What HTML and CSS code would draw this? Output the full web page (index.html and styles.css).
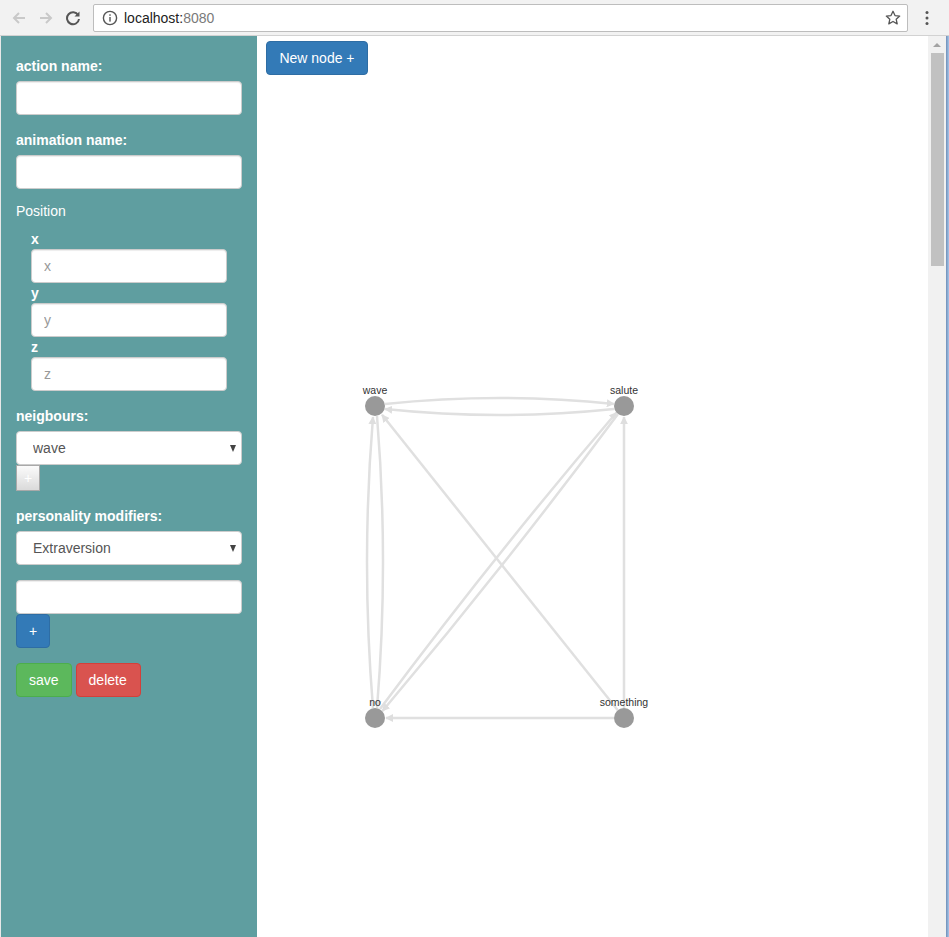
FILE: index.html
```html
<!DOCTYPE html>
<html lang="en">
<head>
<meta charset="utf-8">
<title>localhost:8080</title>
<link rel="stylesheet" href="styles.css">
</head>
<body>
<div class="chrome">
  <span class="navbtn">
    <svg width="16" height="16" viewBox="0 0 16 16"><path d="M14 8H3M8 3L3 8l5 5" fill="none" stroke="#c9c9c9" stroke-width="2"/></svg>
  </span>
  <span class="navbtn">
    <svg width="16" height="16" viewBox="0 0 16 16"><path d="M2 8h11M8 3l5 5-5 5" fill="none" stroke="#c9c9c9" stroke-width="2"/></svg>
  </span>
  <span class="navbtn">
    <svg width="16" height="16" viewBox="0 0 16 16"><path d="M13.2 5.2A6 6 0 1 0 14 9" fill="none" stroke="#555" stroke-width="2"/><path d="M14.5 1.5v5h-5z" fill="#555"/></svg>
  </span>
  <div class="omnibox">
    <svg class="info" width="16" height="16" viewBox="0 0 16 16"><circle cx="8" cy="8" r="6.6" fill="none" stroke="#555" stroke-width="1.4"/><rect x="7.3" y="7" width="1.4" height="4.6" fill="#555"/><rect x="7.3" y="4.3" width="1.4" height="1.5" fill="#555"/></svg>
    <span class="url"><span class="host">localhost:</span><span class="port">8080</span></span>
    <svg class="star" width="16" height="16" viewBox="0 0 16 16"><path d="M8 1.3l2 4.3 4.7.5-3.5 3.2 1 4.6L8 11.5l-4.2 2.4 1-4.6L1.3 6.1 6 5.6z" fill="none" stroke="#555" stroke-width="1.3" stroke-linejoin="round"/></svg>
  </div>
  <span class="menu">
    <svg width="16" height="16" viewBox="0 0 16 16"><circle cx="8" cy="2.5" r="1.5" fill="#555"/><circle cx="8" cy="8" r="1.5" fill="#555"/><circle cx="8" cy="13.5" r="1.5" fill="#555"/></svg>
  </span>
</div>

<div class="window">
  <aside class="sidebar">
    <div class="group">
      <label class="field-label">action name:</label>
      <input class="text-input" type="text">
    </div>
    <div class="group">
      <label class="field-label">animation name:</label>
      <input class="text-input" type="text">
    </div>
    <p class="position-title">Position</p>
    <div class="coords">
      <label class="coord-label">x</label>
      <input class="text-input coord-input" type="text" placeholder="x">
      <label class="coord-label">y</label>
      <input class="text-input coord-input" type="text" placeholder="y">
      <label class="coord-label">z</label>
      <input class="text-input coord-input" type="text" placeholder="z">
    </div>
    <div class="group-top">
      <label class="field-label">neigbours:</label>
      <div class="select-wrap">
        <select class="select"><option>wave</option></select>
      </div>
      <button class="btn-tiny">+</button>
    </div>
    <div class="group-top">
      <label class="field-label">personality modifiers:</label>
      <div class="select-wrap">
        <select class="select"><option>Extraversion</option></select>
      </div>
    </div>
    <div class="group-top">
      <input class="text-input" type="text">
      <button class="btn btn-primary">+</button>
    </div>
    <div class="actions">
      <button class="btn btn-success">save</button>
      <button class="btn btn-danger">delete</button>
    </div>
  </aside>

  <main class="main">
    <button class="btn btn-primary">New node +</button>
    <svg class="graph" width="671" height="901" viewBox="257 36 671 901">
      <defs>
        <marker id="arrow" viewBox="0 0 10 10" refX="9" refY="5" markerUnits="userSpaceOnUse" markerWidth="8" markerHeight="8" orient="auto">
          <path d="M0 0L10 5L0 10z" fill="#dedede"/>
        </marker>
      </defs>
      <g fill="none" stroke="#e0e0e0" stroke-width="2.5" marker-end="url(#arrow)">
        <path d="M385 404 Q499.5 392 614 404"/>
        <path d="M614 409 Q499.5 421 385 409"/>
        <path d="M373 708 Q361 562 373 417"/>
        <path d="M377 416 Q389 562 377 708"/>
        <path d="M617.8 710.2 L382 414.8"/>
        <path d="M380 709 Q493 557 616.5 412.5"/>
        <path d="M618 414 Q505 566 382.5 711"/>
        <path d="M624 708 L624 417"/>
        <path d="M614 718 L386 718"/>
      </g>
      <g fill="#999">
        <circle cx="375" cy="406" r="10"/>
        <circle cx="624" cy="406" r="10"/>
        <circle cx="375" cy="718" r="10"/>
        <circle cx="624" cy="718" r="10"/>
      </g>
      <g class="node-label" text-anchor="middle">
        <text x="375" y="394">wave</text>
        <text x="624" y="394">salute</text>
        <text x="375" y="706">no</text>
        <text x="624" y="706">something</text>
      </g>
    </svg>
  </main>

  <div class="scrollbar">
    <span class="scroll-up"></span>
    <span class="scroll-thumb"></span>
  </div>
  <div class="frame"></div>
</div>
</body>
</html>
```

FILE: styles.css
```css
html, body {
  margin: 0;
  padding: 0;
}

body {
  width: 949px;
  height: 937px;
  overflow: hidden;
  font-family: "Liberation Sans", Arial, sans-serif;
  font-size: 14px;
  background: #fff;
}

/* browser chrome */
.chrome {
  height: 35px;
  border-bottom: 1px solid #d2d2d2;
  background: #f2f2f2;
  display: flex;
  align-items: center;
  padding-left: 6px;
  box-sizing: content-box;
}

.navbtn {
  width: 26px;
  height: 26px;
  margin-right: 1px;
  display: flex;
  align-items: center;
  justify-content: center;
}

.omnibox {
  margin-left: 6px;
  width: 815px;
  height: 28px;
  box-sizing: border-box;
  background: #fff;
  border: 1px solid #bdbdbd;
  border-radius: 2px;
  display: flex;
  align-items: center;
  padding: 0 6px 0 8px;
}

.omnibox .info {
  flex: none;
}

.url {
  margin-left: 6px;
  font-size: 14px;
  flex: 1;
  color: #222;
}

.port {
  color: #7a7a7a;
}

.star {
  flex: none;
}

.menu {
  margin-left: 11px;
  width: 16px;
  height: 16px;
  display: flex;
}

/* window area */
.window {
  display: flex;
  height: 901px;
  border-left: 1px solid #e8e8e8;
}

.sidebar {
  width: 256px;
  flex: none;
  box-sizing: border-box;
  background: #5f9ea0;
  color: #fff;
  padding: 20px 15px 0 15px;
}

.group {
  margin-bottom: 15px;
}

.group-top {
  margin-top: 15px;
}

.field-label {
  display: block;
  font-weight: bold;
  line-height: 20px;
  margin-bottom: 5px;
}

.text-input {
  display: block;
  width: 226px;
  height: 34px;
  box-sizing: border-box;
  margin: 0;
  border: 1px solid #ccc;
  border-radius: 4px;
  background: #fff;
  padding: 6px 12px;
  font-family: "Liberation Sans", Arial, sans-serif;
  font-size: 14px;
  color: #555;
  box-shadow: inset 0 1px 1px rgba(0, 0, 0, 0.075);
}

.text-input::placeholder {
  color: #999;
}

.position-title {
  margin: -3px 0 8px 0;
  line-height: 20px;
}

.coords {
  padding-left: 15px;
}

.coord-label {
  display: block;
  line-height: 20px;
  font-weight: bold;
}

.coord-input {
  width: 196px;
}

.select-wrap {
  position: relative;
  width: 226px;
}

.select-wrap::after {
  content: "";
  position: absolute;
  right: 6px;
  top: 14px;
  border-left: 3.5px solid transparent;
  border-right: 3.5px solid transparent;
  border-top: 7px solid #444;
  pointer-events: none;
}

.select {
  display: block;
  -webkit-appearance: none;
  appearance: none;
  width: 226px;
  height: 34px;
  box-sizing: border-box;
  margin: 0;
  border: 1px solid #ccc;
  border-radius: 4px;
  background: #fff;
  padding: 0 20px 0 16px;
  font-family: "Liberation Sans", Arial, sans-serif;
  font-size: 14px;
  color: #555;
}

.btn-tiny {
  display: block;
  width: 24px;
  height: 26px;
  padding: 0;
  margin: 0;
  border: 1px solid #a9a9a9;
  border-radius: 0;
  background: linear-gradient(#fbfbfb, #dadada);
  color: #fff;
  font-family: "Liberation Sans", Arial, sans-serif;
  font-size: 14px;
  line-height: 20px;
}

.btn {
  display: inline-block;
  height: 34px;
  box-sizing: border-box;
  margin: 0;
  padding: 6px 12px;
  border: 1px solid transparent;
  border-radius: 4px;
  font-family: "Liberation Sans", Arial, sans-serif;
  font-size: 14px;
  line-height: 20px;
  color: #fff;
}

.btn-primary {
  background: #337ab7;
  border-color: #2e6da4;
}

.btn-success {
  background: #5cb85c;
  border-color: #4cae4c;
}

.btn-danger {
  background: #d9534f;
  border-color: #d43f3a;
  padding: 6px 13px 6px 12px;
}

.actions {
  margin-top: 15px;
  display: flex;
  gap: 4px;
}

/* main canvas */
.main {
  position: relative;
  width: 671px;
  flex: none;
  box-sizing: border-box;
  padding: 5px 9px;
  background: #fff;
}

.main > .btn {
  position: relative;
  z-index: 1;
  padding: 6px 12px 6px 12px;
  width: 102px;
}

.graph {
  position: absolute;
  left: 0;
  top: 0;
}

.node-label {
  font-family: "Liberation Sans", Arial, sans-serif;
  font-size: 10.5px;
  fill: #333;
}

/* scrollbar + window frame */
.scrollbar {
  width: 18px;
  flex: none;
  background: #f1f1f1;
  display: flex;
  flex-direction: column;
  align-items: center;
}

.scroll-up {
  margin-top: 7px;
  width: 0;
  height: 0;
  border-left: 4px solid transparent;
  border-right: 4px solid transparent;
  border-bottom: 4px solid #a3a3a3;
}

.scroll-thumb {
  margin-top: 6px;
  width: 13px;
  height: 213px;
  background: #c1c1c1;
}

.frame {
  width: 3px;
  flex: none;
  background: linear-gradient(90deg, #6f8fb8, #a8c6ea);
}
```
